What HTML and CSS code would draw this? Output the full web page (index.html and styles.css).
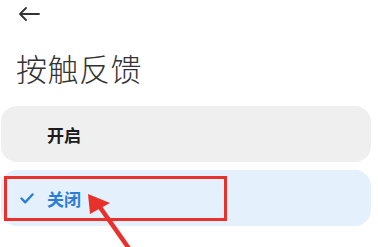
FILE: index.html
```html
<!DOCTYPE html>
<html lang="zh">
<head>
<meta charset="utf-8">
<link rel="stylesheet" href="styles.css">
</head>
<body>
<div class="page">
  <div class="topbar">
    <svg class="back" width="22" height="14" viewBox="0 0 22 14"><path d="M21 7H2M8 1L2 7l6 6" fill="none" stroke="#333" stroke-width="1.8" stroke-linecap="round" stroke-linejoin="round"/></svg>
  </div>
  <h1 class="title">按触反馈</h1>
  <div class="options">
    <div class="option">
      <span class="check"></span>
      <span class="label">开启</span>
    </div>
    <div class="option selected">
      <span class="check"><svg width="14" height="11" viewBox="0 0 14 11"><path d="M1.5 5.5l3.8 3.8L12.5 1.5" fill="none" stroke="#2b7ed6" stroke-width="2.4" stroke-linecap="round" stroke-linejoin="round"/></svg></span>
      <span class="label">关闭</span>
    </div>
  </div>
  <div class="highlight"></div>
  <svg class="pointer" width="378" height="247" viewBox="0 0 378 247"><path d="M130 250L97 203" stroke="#e8312b" stroke-width="4.5" fill="none"/><path d="M88 194L110 203L90 214Z" fill="#e8312b"/></svg>
</div>
</body>
</html>
```
FILE: styles.css
```css
html, body {
  margin: 0;
  padding: 0;
  background: #ffffff;
}
.page {
  position: relative;
  width: 378px;
  height: 247px;
  overflow: hidden;
  font-family: "Noto Sans CJK SC", "Noto Sans", sans-serif;
}
.topbar {
  height: 27px;
  padding: 7px 0 0 18px;
  box-sizing: border-box;
}
.back {
  display: block;
}
.title {
  margin: 21px 0 0 16px;
  font-size: 31px;
  font-weight: 300;
  line-height: 40px;
  color: #333333;
  letter-spacing: 0.5px;
}
.options {
  margin: 18px 7px 0 1px;
  display: flex;
  flex-direction: column;
  gap: 8px;
}
.option {
  height: 56px;
  border-radius: 16px;
  background: #efefef;
  display: flex;
  align-items: center;
  padding-left: 19px;
}
.option.selected {
  background: #e4f0fc;
}
.check {
  width: 27px;
  display: flex;
  align-items: center;
}
.label {
  font-size: 17px;
  font-weight: 700;
  color: #1c1c1c;
}
.selected .label {
  color: #2b7ed6;
}
.highlight {
  position: absolute;
  left: 4px;
  top: 176px;
  width: 217px;
  height: 39px;
  border: 3px solid #e8312b;
}
.pointer {
  position: absolute;
  left: 0;
  top: 0;
}
```
